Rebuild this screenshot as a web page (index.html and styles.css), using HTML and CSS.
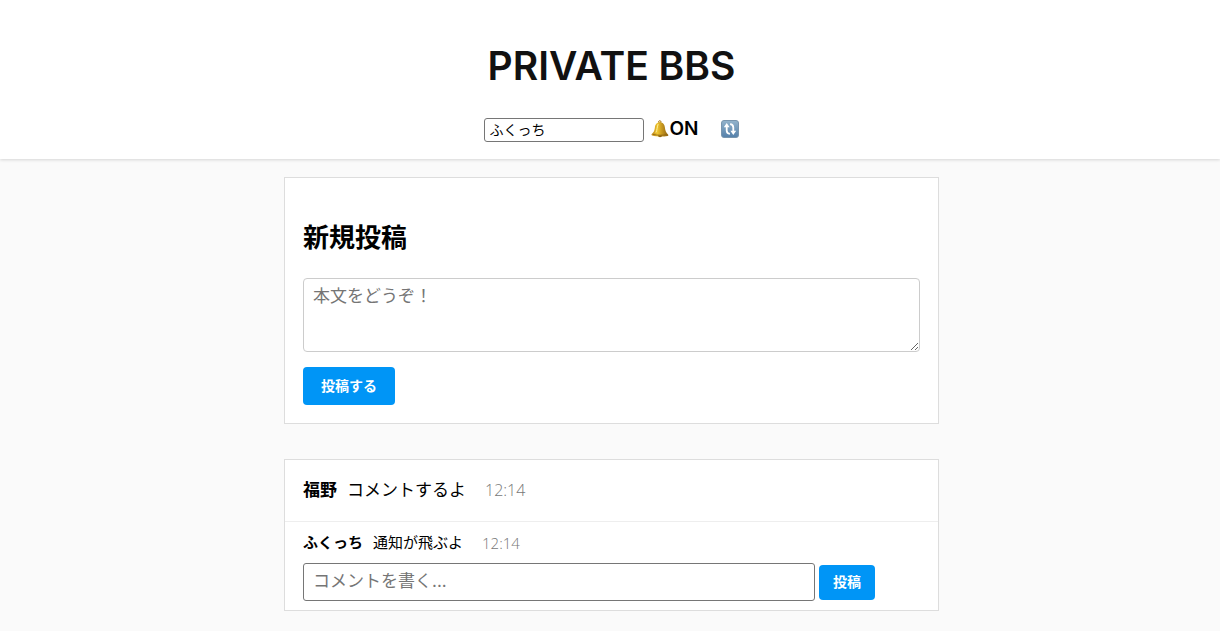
FILE: index.html
```
<!DOCTYPE html>
<html lang="ja">
<head>
    <meta charset="UTF-8">
    <meta name="viewport" content="width=device-width, initial-scale=1.0">
    <title>PRIVATE BBS</title>
    <link rel="stylesheet" href="styles.css">
</head>
<body>
    <!-- ヘッダー -->
    <header class="header">
        <h1>PRIVATE BBS</h1>
        <div class="controls">
            <input type="text" class="name-input" value="ふくっち" aria-label="名前">
            <button type="button" class="notify-btn">
                <svg class="bell" viewBox="0 0 18 18" aria-hidden="true">
                    <defs>
                        <linearGradient id="gold" x1="0" x2="1">
                            <stop offset="0" stop-color="#b98217"/>
                            <stop offset=".35" stop-color="#f0c62f"/>
                            <stop offset=".6" stop-color="#c99a20"/>
                            <stop offset="1" stop-color="#8f6210"/>
                        </linearGradient>
                    </defs>
                    <circle cx="8.8" cy="1.9" r="1.2" fill="none" stroke="#a97815"/>
                    <path d="M8.8 2.2C5.4 2.3 4.2 4.8 3.9 7.5 3.5 11 2.6 12.3.8 14.1c-.5.6-.3 1.3.5 1.5 4 1.2 10.8 1.3 15.3.3.8-.2 1-.9.4-1.5-2-1.8-2.7-3.6-3.1-7-.4-3-1.8-5.2-5.1-5.2z" fill="url(#gold)"/>
                    <path d="M2 14.4c4.3 1 9.5 1.1 14.2.2" fill="none" stroke="#8b6212" stroke-width=".8"/>
                    <path d="M7 15.6c.2 2 3.8 2.1 4.2 0z" fill="#8e6314"/>
                    <path d="M7.2 4.2C6 6.5 6.2 10.2 4.9 12.6" fill="none" stroke="#fff09a" stroke-width="1"/>
                </svg><span>ON</span>
            </button>
            <button type="button" class="reload-btn" aria-label="更新">
                <svg viewBox="0 0 18 18" aria-hidden="true">
                    <defs>
                        <linearGradient id="blue" x2="0" y2="1">
                            <stop offset="0" stop-color="#94b4cc"/>
                            <stop offset="1" stop-color="#5480aa"/>
                        </linearGradient>
                    </defs>
                    <rect x=".5" y=".5" width="17" height="17" rx="2.5" fill="url(#blue)" stroke="#7895ae"/>
                    <path d="M5.7 6v4.5c0 2 1 3.2 3.2 3.3M12.3 12V7.5c0-2-1-3.2-3.2-3.3" fill="none" stroke="#fff" stroke-width="1.8"/>
                    <path d="M2.8 7.3l2.9-4.2 2.9 4.2zM9.4 10.7h5.8l-2.9 4.2z" fill="#fff"/>
                </svg>
            </button>
        </div>
    </header>

    <main class="container">
        <!-- 新規投稿 -->
        <section class="card new-post">
            <h2>新規投稿</h2>
            <form>
                <textarea placeholder="本文をどうぞ！" aria-label="本文"></textarea>
                <button type="button" class="btn">投稿する</button>
            </form>
        </section>

        <!-- 投稿一覧 -->
        <article class="card">
            <div class="post">
                <strong>福野</strong>
                <span>コメントするよ</span>
                <time>12:14</time>
            </div>
            <div class="comments">
                <div class="comment">
                    <strong>ふくっち</strong>
                    <span>通知が飛ぶよ</span>
                    <time>12:14</time>
                </div>
                <form class="comment-form">
                    <input type="text" placeholder="コメントを書く..." aria-label="コメント">
                    <button type="button" class="btn btn-small">投稿</button>
                </form>
            </div>
        </article>
    </main>
</body>
</html>
```

FILE: styles.css
```
* {
    box-sizing: border-box;
}

body {
    margin: 0;
    background: #fafafa;
    color: #000;
    font-family: Inter, "Noto Sans CJK JP", sans-serif;
}

input, textarea, button {
    font-family: inherit;
    margin: 0;
}

button {
    border: none;
    cursor: pointer;
}

/* ヘッダー */
.header {
    background: #fff;
    padding: 42px 0 17px 3px;
    box-shadow: 0 1px 3px rgba(0,0,0,0.15);
}

h1 {
    margin: 0 0 28px;
    font-size: 39px;
    line-height: 48px;
    font-weight: 600;
    text-align: center;
    color: #111;
}

.controls {
    display: flex;
    justify-content: center;
    align-items: center;
}

.name-input {
    width: 160px;
    height: 24px;
    padding: 0 4px 2px;
    border: 1px solid #767676;
    border-radius: 3px;
    font-size: 14px;
}

.notify-btn, .reload-btn {
    display: flex;
    align-items: center;
    padding: 0 0 2px;
    background: none;
    color: #000;
    font-size: 19px;
    line-height: 22px;
    font-weight: 600;
}

.notify-btn {
    margin: 0 22px 0 7px;
}

.controls svg {
    width: 18px;
    height: 18px;
}

/* カード */
.container {
    max-width: 658px;
    margin: 18px auto;
    padding-left: 3px;
}

.card {
    margin-bottom: 35px;
    background: #fff;
    border: 1px solid #ddd;
}

.new-post {
    padding: 40px 18px 18px;
}

h2 {
    margin: 0 0 20px;
    font-size: 26px;
    line-height: 40px;
    font-weight: 700;
}

textarea {
    display: block;
    width: 100%;
    height: 74px;
    margin-bottom: 15px;
    padding: 4px 9px;
    border: 1px solid #ccc;
    border-radius: 4px;
    font-size: 17px;
    line-height: 26px;
    resize: vertical;
}

::placeholder {
    color: #757575;
}

.btn {
    height: 38px;
    padding: 0 18px 2px;
    background: #0095f6;
    color: #fff;
    border-radius: 4px;
    font-size: 14px;
    font-weight: 600;
}

/* 投稿とコメント */
.post {
    padding: 18px;
    font-size: 17px;
    line-height: 25px;
    border-bottom: 1px solid #eee;
}

.post, .comment {
    display: flex;
    align-items: center;
    gap: 10px;
}

time {
    margin-left: 9px;
    color: #777;
    font-family: "Open Sans", sans-serif;
    font-size: 16px;
    font-weight: 300;
}

.comments {
    padding: 9px 18px;
}

.comment {
    margin-bottom: 8px;
    font-size: 15px;
    line-height: 24px;
}

.comment time {
    font-size: 15px;
}

.comment-form {
    display: flex;
    align-items: center;
    gap: 4px;
}

.comment-form input {
    width: 83%;
    height: 38px;
    padding: 0 9px 2px;
    border: 1px solid #767676;
    border-radius: 3px;
    font-size: 17px;
}

.btn-small {
    height: 35px;
    padding: 0 14px 2px;
}
```
